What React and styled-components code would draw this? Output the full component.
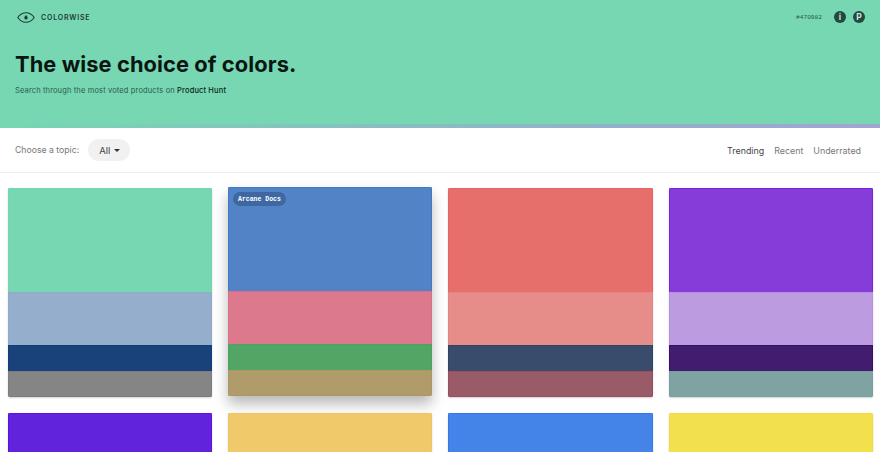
import React from 'react';
import styled, { createGlobalStyle } from 'styled-components';

const GlobalStyle = createGlobalStyle`
  html, body {
    margin: 0;
    background: #fff;
    font-family: Inter, "Liberation Sans", sans-serif;
  }
`;

const Page = styled.div`
  height: 452px;
  overflow: hidden;
`;

const Hero = styled.header`
  height: 124px;
  box-sizing: border-box;
  padding: 8px 15px 0;
  background: #76d7b2;
`;

const TopBar = styled.div`
  display: flex;
  align-items: center;
  justify-content: space-between;
  height: 18px;
`;

const Brand = styled.div`
  display: flex;
  align-items: center;
  gap: 6px;
  margin-left: 2px;
  font-size: 7px;
  font-weight: 600;
  letter-spacing: 0.8px;
  color: #1f3d36;
`;

const Tools = styled.div`
  display: flex;
  align-items: center;
  gap: 7px;
`;

const HexTag = styled.span`
  margin-right: 5px;
  font-family: "Liberation Mono", monospace;
  font-size: 6.2px;
  color: #2c5a4e;
`;

const RoundIcon = styled.span`
  display: flex;
  align-items: center;
  justify-content: center;
  width: 12px;
  height: 12px;
  border-radius: 50%;
  background: #24483f;
  color: #c8efe0;
  font-size: 8.5px;
  font-weight: 700;
`;

const Title = styled.h1`
  margin: 23px 0 0;
  font-size: 21.8px;
  line-height: 30px;
  font-weight: 700;
  color: #0a1512;
  letter-spacing: 0.1px;
`;

const Lead = styled.p`
  margin: 6px 0 0;
  font-size: 7.5px;
  line-height: 12px;
  color: #2c5a4e;
  letter-spacing: 0.14px;
  b {
    font-weight: 500;
    color: #10241f;
  }
`;

const GradientBar = styled.div`
  height: 4px;
  background: linear-gradient(to right, #76d7b2 0%, #94aecb 72%, #a2a4d2 100%);
`;

const Toolbar = styled.nav`
  display: flex;
  align-items: center;
  justify-content: space-between;
  height: 45px;
  box-sizing: border-box;
  padding: 0 19px 0 15px;
  border-bottom: 1px solid #eeeeee;
`;

const TopicPicker = styled.div`
  display: flex;
  align-items: center;
  gap: 9px;
  font-size: 8.7px;
  color: #777;
`;

const TopicButton = styled.span`
  display: flex;
  align-items: center;
  gap: 4px;
  height: 22px;
  padding: 0 10px 0 11px;
  border-radius: 11px;
  background: #f1f1f1;
  color: #444;
  font-size: 9.5px;
`;

const Caret = styled.i`
  border: 3px solid transparent;
  border-top-color: #333;
  border-bottom: 0;
`;

const Sort = styled.div`
  display: flex;
  gap: 10px;
`;

const SortLink = styled.a`
  font-size: 8.9px;
  color: ${(p) => (p.$active ? '#444' : '#777')};
`;

const Grid = styled.main`
  display: grid;
  grid-template-columns: repeat(4, 1fr);
  gap: 16px;
  padding: 15px 7.25px 0 7.75px;
`;

const Card = styled.article`
  position: relative;
  display: grid;
  grid-template-rows: 104px 53px 26px 26px;
  height: 209px;
  border-radius: 2px;
  overflow: hidden;
  box-shadow: 0 1px 2px rgba(0, 0, 0, 0.18);
  ${(p) => p.$raised && `
    transform: translateY(-1px);
    box-shadow: 0 8px 14px rgba(0, 0, 0, 0.28);
  `}
`;

const Stripe = styled.div`
  box-sizing: border-box;
  background: ${(p) => p.$color};
  border: 1px solid ${(p) => p.$edge};
  border-bottom-color: ${(p) => (p.$last ? p.$edge : p.$color)};
`;

const NameTag = styled.span`
  position: absolute;
  top: 5px;
  left: 5px;
  padding: 3px 5px 2px;
  border-radius: 8px;
  background: rgba(40, 70, 120, 0.45);
  font-family: "Liberation Mono", monospace;
  font-size: 6.5px;
  font-weight: 700;
  line-height: 9px;
  color: #fff;
`;

// each stripe is [fill, edge]
const palettes = [
  [['#76d7b2', '#70d8b0'], ['#94aecb', '#8eabcb'], ['#19427b', '#0d3f80'], ['#858585', '#7d7d7d']],
  [['#5283c6', '#4079c6'], ['#dc798c', '#dc6f85'], ['#52a565', '#48a55d'], ['#b09b6b', '#ae9660']],
  [['#e76f6b', '#e76560'], ['#e68d89', '#e6847f'], ['#394c6b', '#2a4564'], ['#995b68', '#a04a60']],
  [['#853cd8', '#7b22dd'], ['#bd9be0', '#b78fe2'], ['#421d6f', '#3a0a70'], ['#7ea3a2', '#76a09f']],
  [['#6124dc', '#5a10e6'], ['#6124dc', '#5a10e6'], ['#6124dc', '#5a10e6'], ['#6124dc', '#5a10e6']],
  [['#f0c96a', '#f0c55e'], ['#f0c96a', '#f0c55e'], ['#f0c96a', '#f0c55e'], ['#f0c96a', '#f0c55e']],
  [['#4484e8', '#307ae9'], ['#4484e8', '#307ae9'], ['#4484e8', '#307ae9'], ['#4484e8', '#307ae9']],
  [['#f2e04d', '#f1dd3a'], ['#f2e04d', '#f1dd3a'], ['#f2e04d', '#f1dd3a'], ['#f2e04d', '#f1dd3a']],
];

const EyeLogo = () => (
  <svg width="18" height="11" viewBox="0 0 18 11" fill="none">
    <path d="M.8 5.5C3 2.3 5.8.7 9 .7s6 1.6 8.2 4.8C15 8.7 12.2 10.3 9 10.3S3 8.7.8 5.5Z" stroke="#1f3d36" strokeWidth="1.1" />
    <path d="M9 3c1 1.1 1.7 2 1.7 2.9a1.7 1.7 0 0 1-3.4 0C7.300 5 8 4.100 9 3Z" fill="#1f3d36" />
  </svg>
);

const App = () => (
  <Page>
    <GlobalStyle />
    <Hero>
      <TopBar>
        <Brand>
          <EyeLogo />
          COLORWISE
        </Brand>
        <Tools>
          <HexTag>#470982</HexTag>
          <RoundIcon>i</RoundIcon>
          <RoundIcon>P</RoundIcon>
        </Tools>
      </TopBar>
      <Title>The wise choice of colors.</Title>
      <Lead>
        Search through the most voted products on <b>Product Hunt</b>
      </Lead>
    </Hero>
    <GradientBar />
    <Toolbar>
      <TopicPicker>
        Choose a topic:
        <TopicButton>
          All
          <Caret />
        </TopicButton>
      </TopicPicker>
      <Sort>
        <SortLink $active>Trending</SortLink>
        <SortLink>Recent</SortLink>
        <SortLink>Underrated</SortLink>
      </Sort>
    </Toolbar>
    <Grid>
      {palettes.map((stripes, index) => (
        <Card key={index.toString()} $raised={index === 1}>
          {stripes.map(([color, edge], stripe) => (
            <Stripe key={stripe.toString()} $color={color} $edge={edge} $last={stripe === 3} />
          ))}
          {index === 1 && <NameTag>Arcane Docs</NameTag>}
        </Card>
      ))}
    </Grid>
  </Page>
);

export default App;
